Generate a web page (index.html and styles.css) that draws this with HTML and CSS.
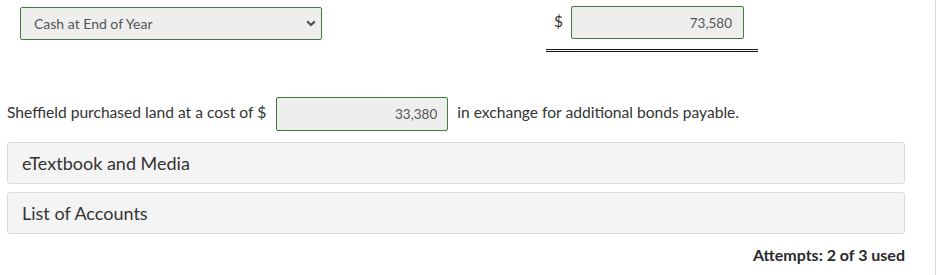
FILE: index.html
```html
<!DOCTYPE html>
<html>
<head>
<meta charset="utf-8">
<link rel="stylesheet" href="styles.css">
</head>
<body>
<div class="page">
  <div class="row-top">
    <div class="select-wrap">
      <select class="select"><option>Cash at End of Year</option></select>
      <svg class="chev" width="10" height="7" viewBox="0 0 10 7"><path d="M1.2 1.4 L5 5 L8.8 1.4" fill="none" stroke="#555" stroke-width="2.2"/></svg>
    </div>
    <div class="amount-cell">
      <span class="dollar">$</span>
      <input class="num total" type="text" value="73,580">
    </div>
  </div>
  <div class="sentence">
    <span>Sheffield purchased land at a cost of $</span>
    <input class="num land" type="text" value="33,380">
    <span>in exchange for additional bonds payable.</span>
  </div>
  <div class="panel">eTextbook and Media</div>
  <div class="panel">List of Accounts</div>
  <div class="attempts">Attempts: 2 of 3 used</div>
</div>
</body>
</html>
```

FILE: styles.css
```css
html, body {
  margin: 0;
  padding: 0;
  background: #fff;
}
body {
  font-family: Lato, "Open Sans", sans-serif;
  color: #333;
}
.page {
  width: 935px;
  height: 275px;
  border-right: 1px solid #dcdcdc;
  box-sizing: content-box;
  padding: 0;
}
.row-top {
  display: flex;
  align-items: flex-start;
  height: 90px;
}
.select-wrap {
  position: relative;
  margin-left: 20px;
  margin-top: 7px;
  width: 302px;
  height: 33px;
}
.select {
  -webkit-appearance: none;
  appearance: none;
  width: 302px;
  height: 33px;
  box-sizing: border-box;
  border: 1px solid #3e7d3a;
  border-radius: 2px;
  background: #eeeeee;
  font-family: Lato, sans-serif;
  font-size: 14px;
  color: #555;
  padding: 0 0 0 13px;
  margin: 0;
  outline: none;
}
.chev {
  position: absolute;
  right: 6px;
  top: 13px;
}
.amount-cell {
  display: flex;
  margin-left: 224px;
  margin-top: 6px;
  width: 212px;
  height: 46px;
  align-items: flex-start;
  border-bottom: 3px double #111;
  box-sizing: border-box;
}
.dollar {
  font-size: 15.5px;
  color: #333;
  margin-left: 8px;
  margin-top: 6px;
  width: 17px;
}
.num {
  box-sizing: border-box;
  border: 1px solid #3e7d3a;
  border-radius: 2px;
  background: #eeeeee;
  font-family: Lato, sans-serif;
  font-size: 13.5px;
  color: #555;
  text-align: right;
  margin: 0;
  outline: none;
}
.total {
  width: 173px;
  height: 33px;
  padding: 0 11px 0 0;
}
.sentence {
  display: flex;
  align-items: center;
  padding-left: 7px;
  margin-top: 7px;
  height: 33px;
  font-size: 15.6px;
  color: #333;
}
.sentence span {
  margin-top: -3px;
}
.land {
  width: 172px;
  height: 34px;
  padding: 0 10px 0 0;
  margin: 0 9px 0 10px;
}
.panel {
  margin: 0 0 0 7px;
  width: 898px;
  height: 42px;
  box-sizing: border-box;
  background: #f4f4f4;
  border: 1px solid #dcdcdc;
  border-radius: 3px;
  font-size: 18px;
  color: #333;
  padding: 0 0 1px 14px;
  display: flex;
  align-items: center;
}
.sentence + .panel {
  margin-top: 12px;
}
.panel + .panel {
  margin-top: 8px;
}
.attempts {
  width: 905px;
  text-align: right;
  font-weight: bold;
  font-size: 16px;
  color: #2a2a2a;
  margin-top: 11px;
}
```
